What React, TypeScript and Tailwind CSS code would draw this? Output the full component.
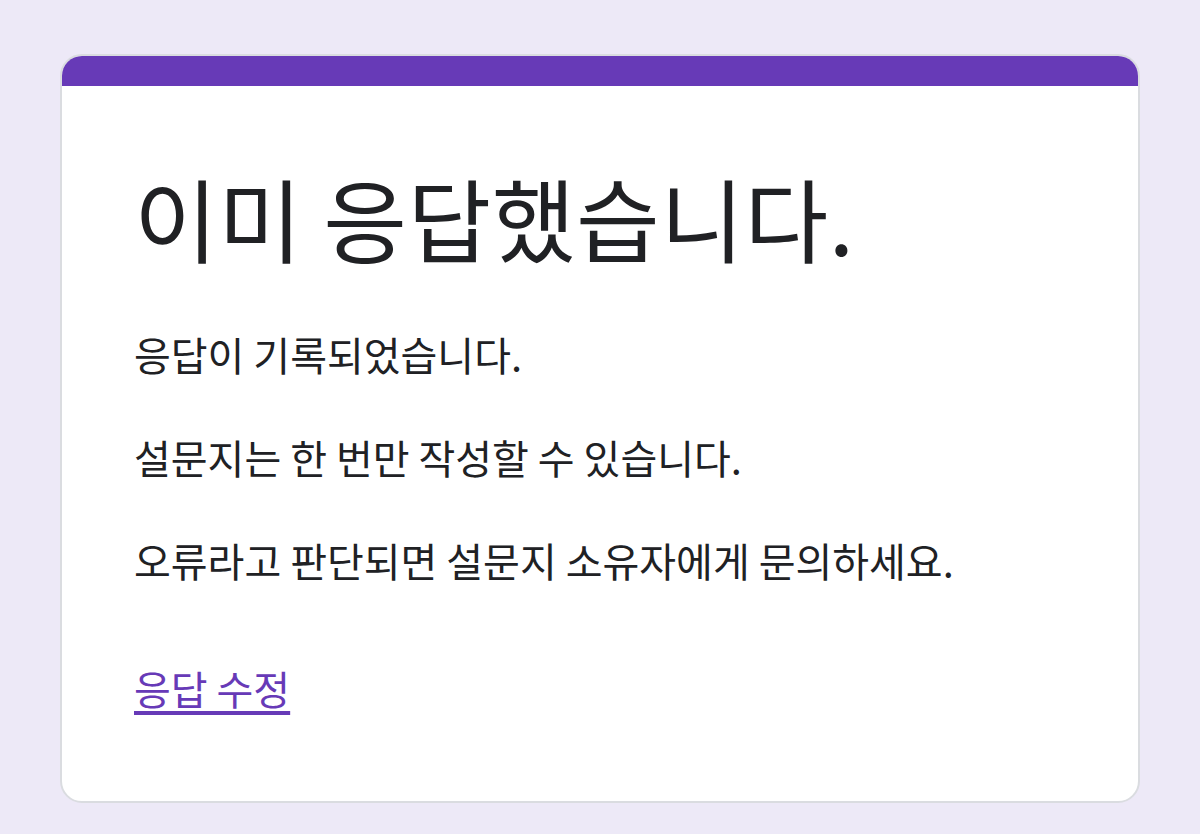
export default function App() {
  return (
    <div
      className="min-h-[834px] w-full bg-[#ede9f7] px-[60px] pt-[54px] pb-[30px]"
      style={{ fontFamily: '"Noto Sans CJK KR", "Noto Sans", sans-serif' }}
    >
      <div className="overflow-hidden rounded-[22px] border-2 border-[#dadce0] bg-white">
        <div className="-mx-[2px] -mt-[2px] h-[32px] bg-[#673ab7]" />
        <div className="px-[72px] pt-[76px] pb-[89px] text-[#202124]">
          <h1 className="text-[91px] leading-[1.2] font-normal tracking-[0.5px]">이미 응답했습니다.</h1>
          <div className="mt-[59px] flex flex-col gap-[55px] text-[40px] leading-[1.2]">
            <p>응답이 기록되었습니다.</p>
            <p>설문지는 한 번만 작성할 수 있습니다.</p>
            <p>오류라고 판단되면 설문지 소유자에게 문의하세요.</p>
          </div>
          <a href="#" className="mt-[80px] inline-block text-[40px] leading-[1.2] text-[#673ab7] underline underline-offset-[6px]">
            응답 수정
          </a>
        </div>
      </div>
    </div>
  );
}
